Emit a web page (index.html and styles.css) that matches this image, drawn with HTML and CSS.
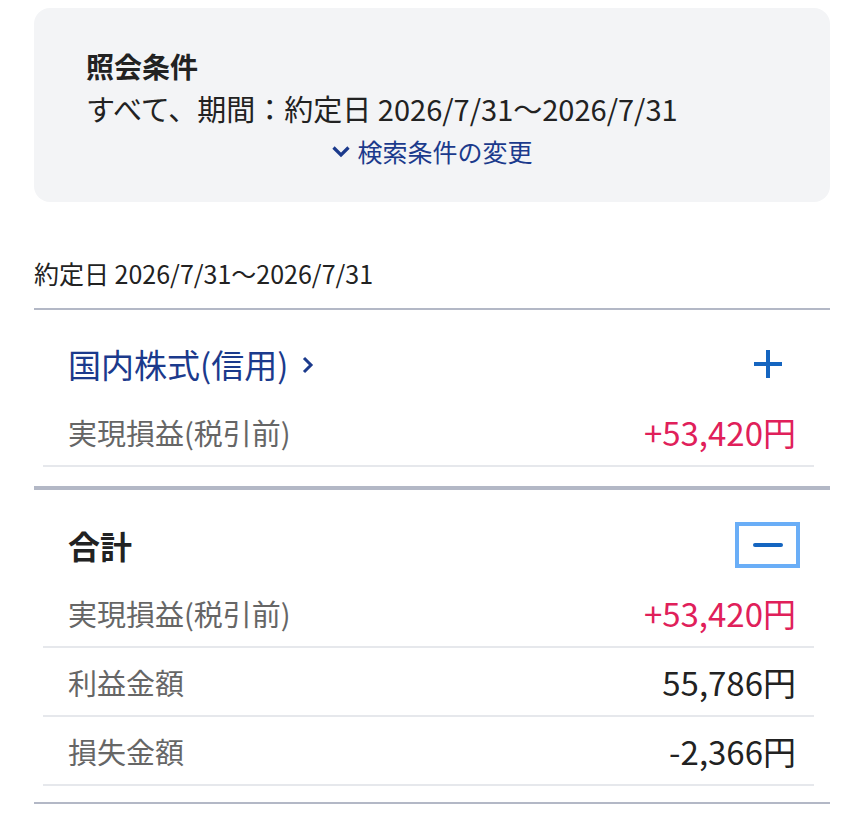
FILE: index.html
```html
<!DOCTYPE html>
<html lang="ja">
  <head>
    <meta charset="UTF-8" />
    <meta name="viewport" content="width=device-width, initial-scale=1.0" />
    <title>実現損益</title>
    <link rel="stylesheet" href="styles.css">
  </head>
  <body>
    <!-- 照会条件 -->
    <div class="condition">
      <div class="condition-title">照会条件</div>
      <div class="condition-text">すべて、期間：約定日 2026/7/31〜2026/7/31</div>
      <a class="condition-link" href="#">
        <svg width="20" height="13" viewBox="0 0 20 13"><path d="M2.5 2.5 L10 10 L17.5 2.5" fill="none" stroke="#1b3a8c" stroke-width="3.2"/></svg>
        検索条件の変更
      </a>
    </div>

    <div class="period">約定日 2026/7/31〜2026/7/31</div>

    <!-- 国内株式(信用) -->
    <div class="section">
      <div class="section-head">
        <a class="section-name" href="#">国内株式(信用)
          <svg class="chev" width="12" height="18" viewBox="0 0 12 18"><path d="M2 2 L9 9 L2 16" fill="none" stroke="#1b3a8c" stroke-width="3"/></svg>
        </a>
        <button class="toggle">
          <svg width="30" height="30" viewBox="0 0 30 30"><path d="M15 1 V29 M1 15 H29" stroke="#1565c0" stroke-width="4"/></svg>
        </button>
      </div>
      <div class="row">
        <span class="label">実現損益(税引前)</span>
        <span class="value plus">+53,420円</span>
      </div>
    </div>

    <!-- 合計 -->
    <div class="section total">
      <div class="section-head">
        <span class="section-name bold">合計</span>
        <button class="toggle focused">
          <svg width="30" height="30" viewBox="0 0 30 30"><path d="M2 15 H28" stroke="#1565c0" stroke-width="4" stroke-linecap="round"/></svg>
        </button>
      </div>
      <div class="row">
        <span class="label">実現損益(税引前)</span>
        <span class="value plus">+53,420円</span>
      </div>
      <div class="row">
        <span class="label">利益金額</span>
        <span class="value">55,786円</span>
      </div>
      <div class="row">
        <span class="label">損失金額</span>
        <span class="value">-2,366円</span>
      </div>
    </div>
  </body>
</html>
```

FILE: styles.css
```css
body {
  font-family: "Noto Sans CJK JP", "Noto Sans", sans-serif;
  margin: 8px 34px 0 34px;
  background-color: #ffffff;
  color: #222222;
}
.condition {
  background-color: #f3f4f6;
  border-radius: 16px;
  padding: 40px 52px 31px 52px;
}
.condition-title {
  font-size: 28px;
  font-weight: bold;
  line-height: 36px;
}
.condition-text {
  font-size: 29px;
  line-height: 40px;
  margin-top: 4px;
}
.condition-link {
  display: flex;
  justify-content: center;
  align-items: center;
  gap: 6px;
  margin-top: 3px;
  color: #1b3a8c;
  text-decoration: none;
  font-size: 25px;
  line-height: 40px;
}
.period {
  font-size: 25px;
  line-height: 34px;
  margin-top: 54px;
  padding-bottom: 18px;
  border-bottom: 2px solid #b3b8c6;
}
.section {
  padding: 26px 16px 19px 9px;
}
.section-head {
  display: flex;
  justify-content: space-between;
  align-items: center;
  height: 56px;
  margin-bottom: 6px;
  padding-left: 25px;
}
.section-name {
  display: flex;
  align-items: center;
  gap: 14px;
  color: #1b3a8c;
  text-decoration: none;
  font-size: 33px;
}
.section-name.bold {
  color: #222222;
  font-weight: bold;
  font-size: 32px;
}
.chev {
  margin-top: 2px;
}
.toggle {
  display: flex;
  align-items: center;
  justify-content: center;
  box-sizing: border-box;
  width: 65px;
  height: 46px;
  margin-right: 14px;
  border: 4px solid transparent;
  background: none;
  padding: 0;
}
.toggle.focused {
  border-color: #6aaef7;
}
.row {
  display: flex;
  justify-content: space-between;
  align-items: center;
  height: 67px;
  padding: 0 18px 0 25px;
  border-bottom: 2px solid #e6e8ec;
}
.label {
  font-size: 29px;
  color: #666666;
}
.value {
  font-size: 33px;
  color: #222222;
}
.value.plus {
  color: #e0205a;
}
.total {
  padding-top: 27px;
  padding-bottom: 16px;
  border-top: 4px solid #b3b8c6;
  border-bottom: 2px solid #b3b8c6;
}
```
